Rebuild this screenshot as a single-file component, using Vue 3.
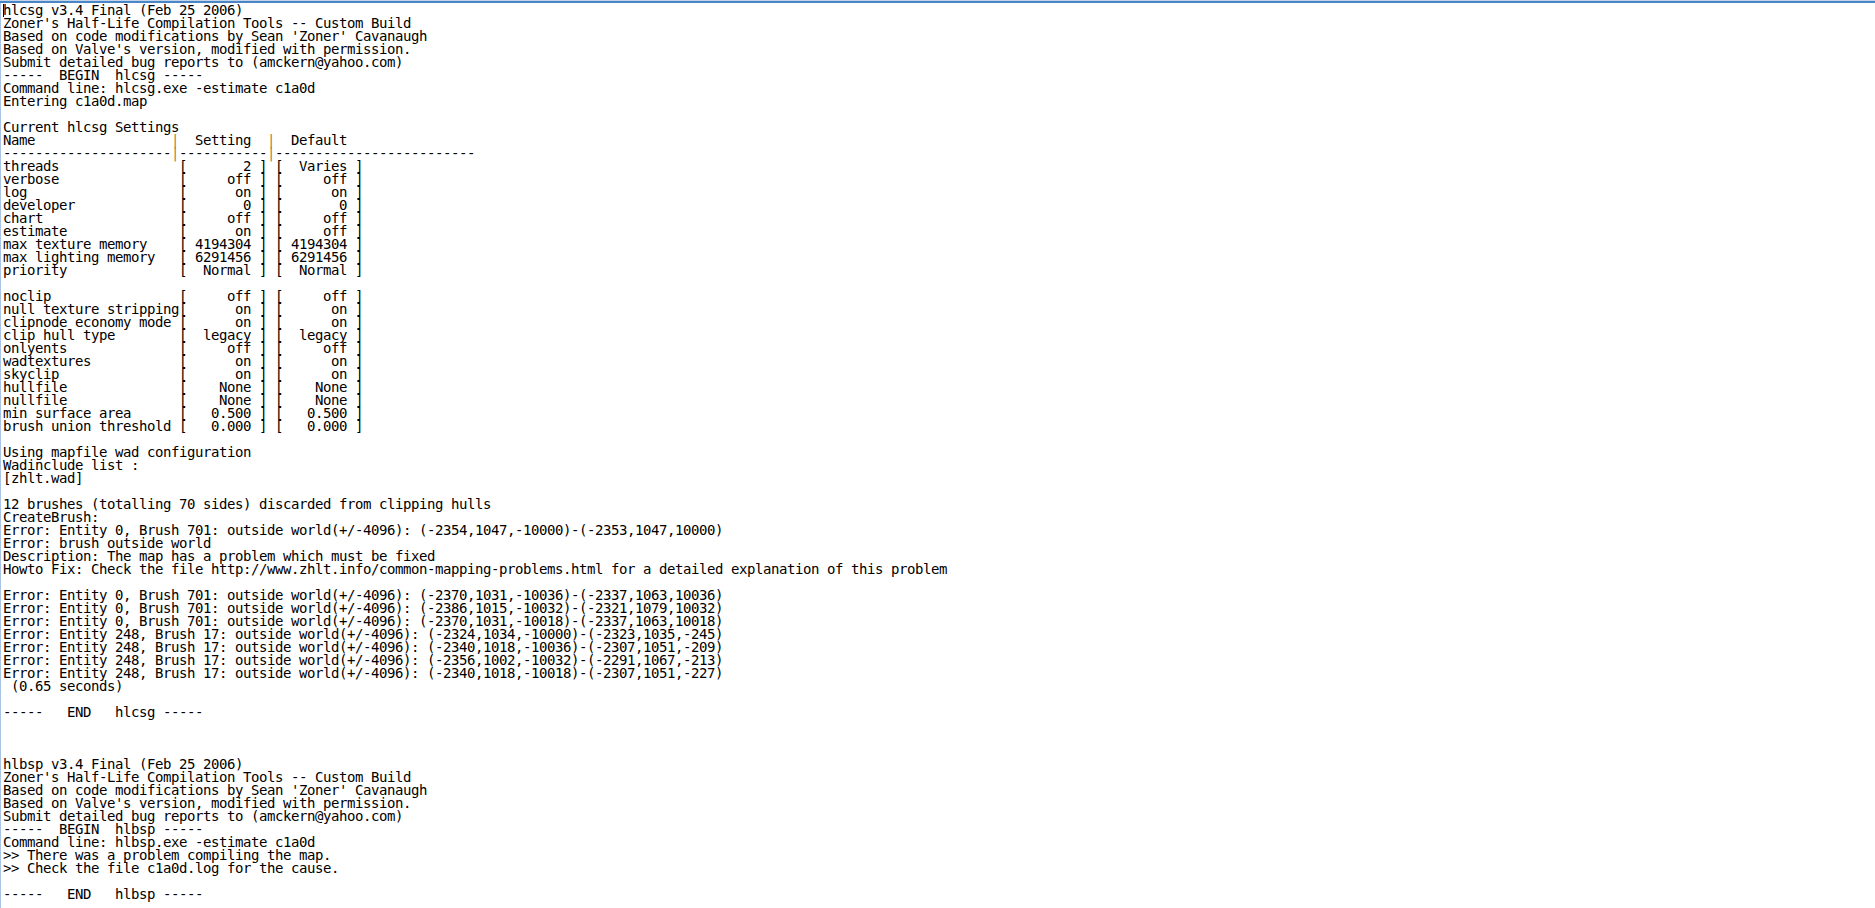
<script setup>
const before = `hlcsg v3.4 Final (Feb 25 2006)
Zoner's Half-Life Compilation Tools -- Custom Build
Based on code modifications by Sean 'Zoner' Cavanaugh
Based on Valve's version, modified with permission.
Submit detailed bug reports to (amckern@yahoo.com)
-----  BEGIN  hlcsg -----
Command line: hlcsg.exe -estimate c1a0d
Entering c1a0d.map

Current hlcsg Settings
`
const tableHead = [
  ['Name                 ', '|', '  Setting  ', '|', '  Default'],
  ['---------------------', '|', '-----------', '|', '-------------------------']
]
const after = `threads               [       2 ] [  Varies ]
verbose               [     off ] [     off ]
log                   [      on ] [      on ]
developer             [       0 ] [       0 ]
chart                 [     off ] [     off ]
estimate              [      on ] [     off ]
max texture memory    [ 4194304 ] [ 4194304 ]
max lighting memory   [ 6291456 ] [ 6291456 ]
priority              [  Normal ] [  Normal ]

noclip                [     off ] [     off ]
null texture stripping[      on ] [      on ]
clipnode economy mode [      on ] [      on ]
clip hull type        [  legacy ] [  legacy ]
onlyents              [     off ] [     off ]
wadtextures           [      on ] [      on ]
skyclip               [      on ] [      on ]
hullfile              [    None ] [    None ]
nullfile              [    None ] [    None ]
min surface area      [   0.500 ] [   0.500 ]
brush union threshold [   0.000 ] [   0.000 ]

Using mapfile wad configuration
Wadinclude list :
[zhlt.wad]

12 brushes (totalling 70 sides) discarded from clipping hulls
CreateBrush:
Error: Entity 0, Brush 701: outside world(+/-4096): (-2354,1047,-10000)-(-2353,1047,10000)
Error: brush outside world
Description: The map has a problem which must be fixed
Howto Fix: Check the file http://www.zhlt.info/common-mapping-problems.html for a detailed explanation of this problem

Error: Entity 0, Brush 701: outside world(+/-4096): (-2370,1031,-10036)-(-2337,1063,10036)
Error: Entity 0, Brush 701: outside world(+/-4096): (-2386,1015,-10032)-(-2321,1079,10032)
Error: Entity 0, Brush 701: outside world(+/-4096): (-2370,1031,-10018)-(-2337,1063,10018)
Error: Entity 248, Brush 17: outside world(+/-4096): (-2324,1034,-10000)-(-2323,1035,-245)
Error: Entity 248, Brush 17: outside world(+/-4096): (-2340,1018,-10036)-(-2307,1051,-209)
Error: Entity 248, Brush 17: outside world(+/-4096): (-2356,1002,-10032)-(-2291,1067,-213)
Error: Entity 248, Brush 17: outside world(+/-4096): (-2340,1018,-10018)-(-2307,1051,-227)
 (0.65 seconds)

-----   END   hlcsg -----



hlbsp v3.4 Final (Feb 25 2006)
Zoner's Half-Life Compilation Tools -- Custom Build
Based on code modifications by Sean 'Zoner' Cavanaugh
Based on Valve's version, modified with permission.
Submit detailed bug reports to (amckern@yahoo.com)
-----  BEGIN  hlbsp -----
Command line: hlbsp.exe -estimate c1a0d
>> There was a problem compiling the map.
>> Check the file c1a0d.log for the cause.

-----   END   hlbsp -----`
</script>

<template>
  <div class="window">
    <div class="frame-top"></div>
    <div class="body">
      <pre class="log">{{ before }}<template v-for="(row, i) in tableHead" :key="i"><template v-for="(cell, j) in row" :key="j"><span v-if="cell === '|'" class="pipe">|</span><template v-else>{{ cell }}</template></template>{{ '\n' }}</template>{{ after }}</pre>
      <span class="caret"></span>
    </div>
  </div>
</template>

<style>
html, body { margin: 0; background: #fff; overflow: hidden; }
</style>

<style scoped>
.window {
  width: 1875px;
  height: 908px;
  display: flex;
  flex-direction: column;
  overflow: hidden;
  background: #fff;
}
.frame-top {
  flex: none;
  height: 3px;
  background: linear-gradient(#c3d4e8 0 1px, #4a86c5 1px 3px);
}
.body {
  position: relative;
  flex: 1;
  border-left: 1px solid #a9c4e4;
  padding: 1px 0 0 2px;
  overflow: hidden;
}
.log {
  margin: 0;
  font-family: "DejaVu Sans Mono", monospace;
  font-size: 14px;
  letter-spacing: -0.428px;
  line-height: 13px;
  color: #000;
  white-space: pre;
}
.pipe {
  color: #b8783c;
}
.caret {
  position: absolute;
  left: 2px;
  top: 1px;
  width: 1px;
  height: 13px;
  background: #000;
}
</style>
